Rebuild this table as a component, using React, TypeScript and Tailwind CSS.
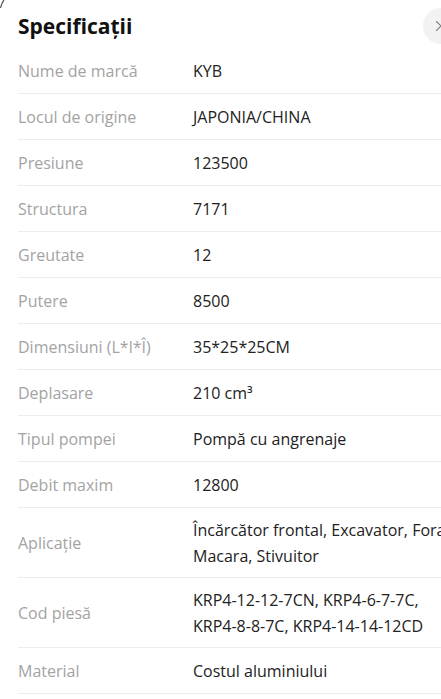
import { X } from "lucide-react"

interface Spec {
  label: string
  value: string
  tall?: boolean
}

const specs: Spec[] = [
  { label: "Nume de marcă", value: "KYB" },
  { label: "Locul de origine", value: "JAPONIA/CHINA" },
  { label: "Presiune", value: "123500" },
  { label: "Structura", value: "7171" },
  { label: "Greutate", value: "12" },
  { label: "Putere", value: "8500" },
  { label: "Dimensiuni (L*l*Î)", value: "35*25*25CM" },
  { label: "Deplasare", value: "210 cm³" },
  { label: "Tipul pompei", value: "Pompă cu angrenaje" },
  { label: "Debit maxim", value: "12800" },
  { label: "Aplicație", value: "Încărcător frontal, Excavator, Foraj, Macara, Stivuitor", tall: true },
  { label: "Cod piesă", value: "KRP4-12-12-7CN, KRP4-6-7-7C, KRP4-8-8-7C, KRP4-14-14-12CD", tall: true },
  { label: "Material", value: "Costul aluminiului" },
]

function SpecRow({ spec }: { spec: Spec }) {
  const parts = spec.value.split(", ")
  return (
    <div className={`flex items-center border-b border-[#ececec] ${spec.tall ? "h-[70px]" : "h-[46px]"}`}>
      <div className="w-[175px] shrink-0 text-[16px] leading-[26px] text-[#a3a3a3]">{spec.label}</div>
      <div className="w-[272px] text-[16px] leading-[26px] text-[#222222]">
        {parts.map((p, i) => (
          <span key={i}>
            <span className="whitespace-nowrap">{p + (i < parts.length - 1 ? "," : "")}</span>
            {i < parts.length - 1 ? " " : ""}
          </span>
        ))}
      </div>
    </div>
  )
}

export default function App() {
  return (
    <div className="relative w-[441px] h-[699px] overflow-hidden bg-white" style={{ fontFamily: '"Open Sans", "Noto Sans", sans-serif' }}>
      <svg className="absolute left-0 top-0" width="6" height="10" viewBox="0 0 6 10">
        <path d="M0.5 8 Q1.5 3 4 0" stroke="#555" strokeWidth="1.2" fill="none" />
      </svg>
      <div className="w-[478px] pl-[18px]">
        <div className="flex items-center justify-between h-[48px] pr-[19px]">
          <h1 className="text-[21px] font-bold text-[#111111] leading-none pt-[4px]">Specificații</h1>
          <div className="w-9 h-9 rounded-full bg-[#f2f2f2] flex items-center justify-center mt-[4px]">
            <X className="w-[18px] h-[18px] text-[#808080]" strokeWidth={1.5} />
          </div>
        </div>
        <div>
          {specs.map((s) => (
            <SpecRow key={s.label} spec={s} />
          ))}
        </div>
      </div>
    </div>
  )
}
